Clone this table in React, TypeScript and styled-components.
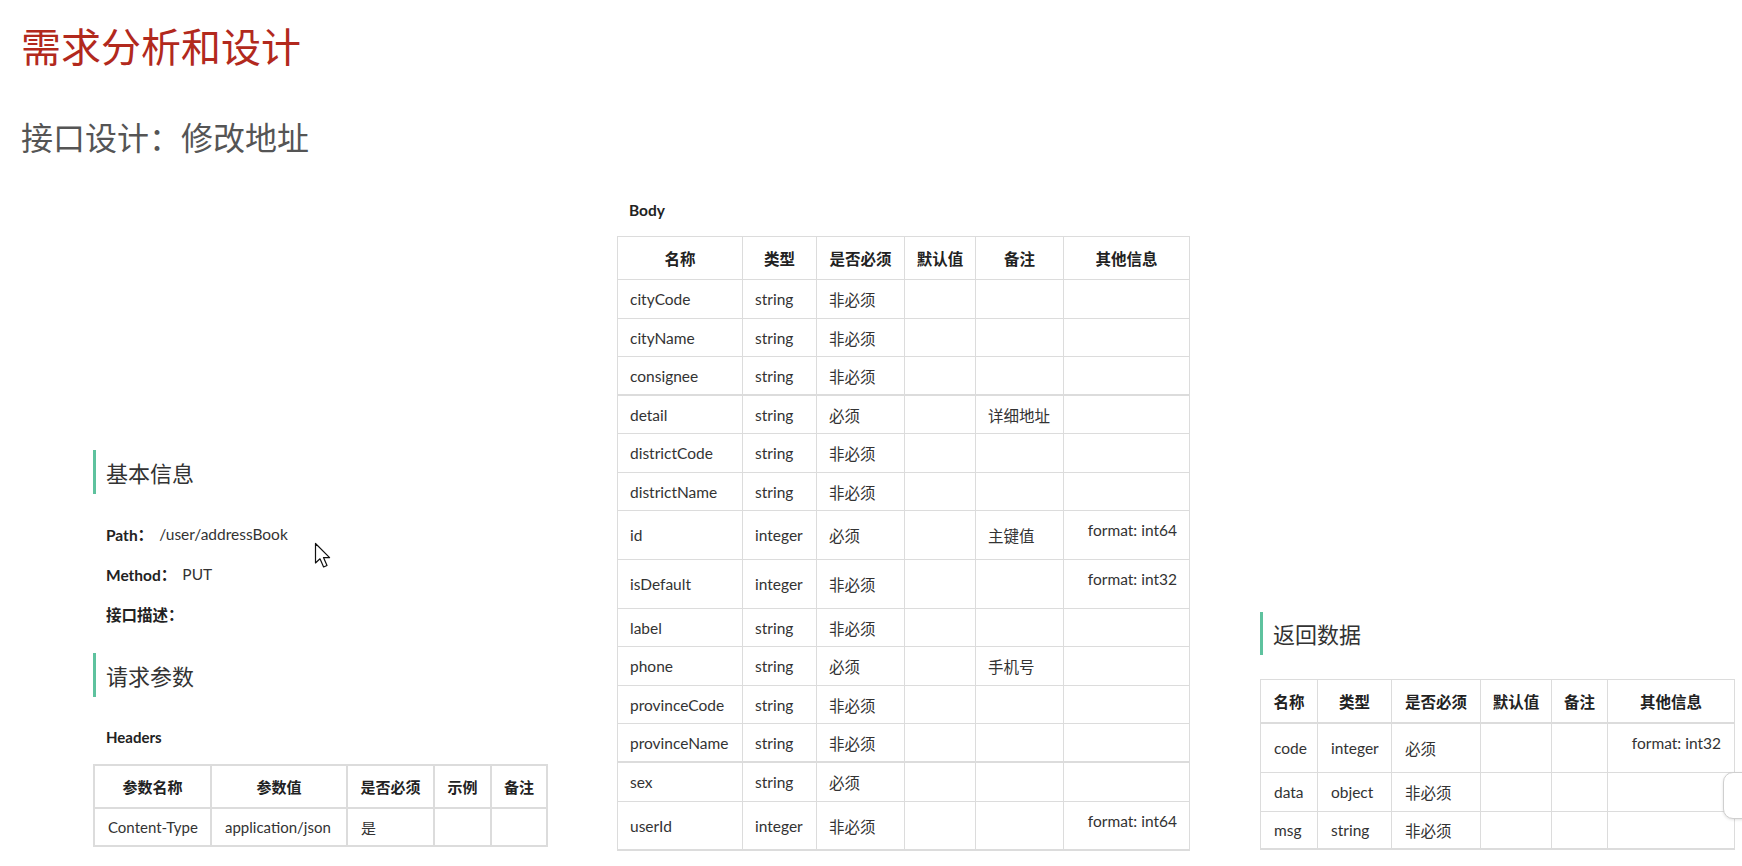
import React from "react";
import styled, { createGlobalStyle } from "styled-components";

const GlobalStyle = createGlobalStyle`
  html, body { margin: 0; padding: 0; background: #ffffff; }
  body {
    font-family: Lato, "Noto Sans CJK SC", sans-serif;
    color: #333333;
  }
`;

const Page = styled.div`
  position: relative;
  width: 1742px;
  height: 866px;
  overflow: hidden;
  display: flex;
  flex-direction: column;
  box-sizing: border-box;
  padding-bottom: 15px;
  background: #ffffff;
`;

const TitleBlock = styled.header`
  padding: 21px 0 0 21px;
  font-family: "Noto Sans CJK SC", sans-serif;
`;

const MainTitle = styled.h1`
  margin: 0;
  font-size: 40px;
  line-height: 48px;
  font-weight: 400;
  color: #b2291d;
`;

const SubTitle = styled.h2`
  margin: 47px 0 0 0;
  font-size: 32px;
  line-height: 40px;
  font-weight: 400;
  color: #555555;
`;

const ContentRow = styled.main`
  flex: 1;
  display: flex;
  align-items: flex-end;
`;

const Column = styled.section<{ $ml: number; $mb: number; $w: number }>`
  margin-left: ${(p) => p.$ml}px;
  margin-bottom: ${(p) => p.$mb}px;
  width: ${(p) => p.$w}px;
  display: flex;
  flex-direction: column;
`;

const SectionHeading = styled.h3<{ $mt?: number; $h: number }>`
  margin: ${(p) => p.$mt ?? 0}px 0 0 0;
  height: ${(p) => p.$h}px;
  line-height: ${(p) => p.$h}px;
  border-left: 3px solid #5ec29e;
  padding-left: 10px;
  font-family: "Noto Sans CJK SC", sans-serif;
  font-size: 22px;
  font-weight: 400;
  color: #333333;
`;

const InfoList = styled.div`
  margin-top: 20px;
  display: flex;
  flex-direction: column;
`;

const InfoRow = styled.div`
  height: 40px;
  display: flex;
  align-items: center;
  padding-left: 13px;
  font-size: 15.5px;
`;

const InfoLabel = styled.span`
  font-weight: 700;
  color: #222222;
`;

const InfoValue = styled.span`
  margin-left: 6px;
  color: #333333;
`;

const SubLabel = styled.div<{ $mt: number; $pl: number; $fs: number }>`
  margin-top: ${(p) => p.$mt}px;
  padding-left: ${(p) => p.$pl}px;
  font-size: ${(p) => p.$fs}px;
  line-height: 20px;
  font-weight: 700;
  color: #222222;
`;

const Table = styled.table<{ $fs: number; $bw: number; $mt: number; $w: number }>`
  margin-top: ${(p) => p.$mt}px;
  width: ${(p) => p.$w}px;
  border-collapse: separate;
  border-spacing: 0;
  table-layout: fixed;
  border-top: ${(p) => p.$bw}px solid #dcdcdc;
  border-left: ${(p) => p.$bw}px solid #dcdcdc;
  font-size: ${(p) => p.$fs}px;
  color: #333333;
`;

const Col = styled.col<{ $w: number }>`
  width: ${(p) => p.$w}px;
`;

const Row = styled.tr<{ $h: number }>`
  height: ${(p) => p.$h}px;
`;

const Th = styled.th<{ $bw: number; $bb: number }>`
  box-sizing: border-box;
  border-right: ${(p) => p.$bw}px solid #dcdcdc;
  border-bottom: ${(p) => p.$bb}px solid #dcdcdc;
  text-align: center;
  vertical-align: middle;
  font-weight: 700;
  color: #222222;
  padding: 0 2px;
  white-space: nowrap;
  overflow: hidden;
`;

const Td = styled.td<{ $bw: number; $bb: number; $pad: number; $fmt?: boolean }>`
  box-sizing: border-box;
  border-right: ${(p) => p.$bw}px solid #dcdcdc;
  border-bottom: ${(p) => p.$bb}px solid #dcdcdc;
  padding: ${(p) => (p.$fmt ? `10px ${p.$pad}px 0 0` : `0 0 0 ${p.$pad}px`)};
  text-align: ${(p) => (p.$fmt ? "right" : "left")};
  vertical-align: ${(p) => (p.$fmt ? "top" : "middle")};
  white-space: nowrap;
  overflow: hidden;
`;

const Cursor = styled.svg`
  position: absolute;
  left: 314px;
  top: 542px;
`;

const SideWidget = styled.div`
  position: absolute;
  left: 1723px;
  top: 772px;
  width: 32px;
  height: 45px;
  border: 1px solid #cfcfcf;
  border-radius: 10px;
  background: #ffffff;
  box-shadow: 0 1px 3px rgba(0, 0, 0, 0.12);
`;

type DataRow = { cells: string[]; h: number; thick?: boolean; fmt?: string };

interface TableSpec {
  widths: number[];
  headers: string[];
  headH: number;
  headThick?: boolean;
  rows: DataRow[];
  fs: number;
  bw: number;
  pad: number;
  mt: number;
  lastThick?: boolean;
}

const DataTable: React.FC<{ spec: TableSpec }> = ({ spec }) => {
  const total = spec.widths.reduce((a, b) => a + b, 0);
  return (
    <Table $fs={spec.fs} $bw={spec.bw} $mt={spec.mt} $w={total}>
      <colgroup>
        {spec.widths.map((w, i) => (
          <Col key={i} $w={i === 0 ? w - spec.bw : w} />
        ))}
      </colgroup>
      <thead>
        <Row $h={spec.headH}>
          {spec.headers.map((h, i) => (
            <Th key={i} $bw={spec.bw} $bb={spec.headThick ? 2 : spec.bw}>
              {h}
            </Th>
          ))}
        </Row>
      </thead>
      <tbody>
        {spec.rows.map((r, ri) => {
          const next = spec.rows[ri + 1];
          const isLast = ri === spec.rows.length - 1;
          const bb = (next && next.thick) || (isLast && spec.lastThick) ? 2 : spec.bw;
          return (
            <Row key={ri} $h={r.h}>
              {r.cells.map((c, ci) => (
                <Td key={ci} $bw={spec.bw} $bb={bb} $pad={spec.pad}>
                  {c}
                </Td>
              ))}
              {spec.headers.length > r.cells.length && (
                <Td $bw={spec.bw} $bb={bb} $pad={spec.pad} $fmt={!!r.fmt}>
                  {r.fmt ?? ""}
                </Td>
              )}
            </Row>
          );
        })}
      </tbody>
    </Table>
  );
};

const headersSpec: TableSpec = {
  widths: [119, 136, 87, 57, 56],
  headers: ["参数名称", "参数值", "是否必须", "示例", "备注"],
  headH: 43,
  rows: [{ cells: ["Content-Type", "application/json", "是", "", ""], h: 38 }],
  fs: 15,
  bw: 2,
  pad: 13,
  mt: 17,
};

const bodySpec: TableSpec = {
  widths: [126, 74, 88, 71, 88, 126],
  headers: ["名称", "类型", "是否必须", "默认值", "备注", "其他信息"],
  headH: 43,
  rows: [
    { cells: ["cityCode", "string", "非必须", "", ""], h: 39 },
    { cells: ["cityName", "string", "非必须", "", ""], h: 38 },
    { cells: ["consignee", "string", "非必须", "", ""], h: 39 },
    { cells: ["detail", "string", "必须", "", "详细地址"], h: 38, thick: true },
    { cells: ["districtCode", "string", "非必须", "", ""], h: 39 },
    { cells: ["districtName", "string", "非必须", "", ""], h: 38 },
    { cells: ["id", "integer", "必须", "", "主键值"], h: 49, fmt: "format: int64" },
    { cells: ["isDefault", "integer", "非必须", "", ""], h: 49, fmt: "format: int32" },
    { cells: ["label", "string", "非必须", "", ""], h: 38 },
    { cells: ["phone", "string", "必须", "", "手机号"], h: 39 },
    { cells: ["provinceCode", "string", "非必须", "", ""], h: 38 },
    { cells: ["provinceName", "string", "非必须", "", ""], h: 39 },
    { cells: ["sex", "string", "必须", "", ""], h: 39, thick: true },
    { cells: ["userId", "integer", "非必须", "", ""], h: 49, fmt: "format: int64" },
  ],
  fs: 15.5,
  bw: 1,
  pad: 12,
  mt: 16,
  lastThick: true,
};

const resultSpec: TableSpec = {
  widths: [58, 74, 89, 71, 56, 127],
  headers: ["名称", "类型", "是否必须", "默认值", "备注", "其他信息"],
  headH: 44,
  headThick: true,
  rows: [
    { cells: ["code", "integer", "必须", "", ""], h: 49, fmt: "format: int32" },
    { cells: ["data", "object", "非必须", "", ""], h: 39 },
    { cells: ["msg", "string", "非必须", "", ""], h: 38 },
  ],
  fs: 15.5,
  bw: 1,
  pad: 13,
  mt: 24,
  lastThick: true,
};

export default function App() {
  return (
    <>
      <GlobalStyle />
      <Page>
        <TitleBlock>
          <MainTitle>需求分析和设计</MainTitle>
          <SubTitle>接口设计：修改地址</SubTitle>
        </TitleBlock>
        <ContentRow>
          <Column $ml={93} $mb={4} $w={455}>
            <SectionHeading $h={44}>基本信息</SectionHeading>
            <InfoList>
              <InfoRow>
                <InfoLabel>Path：</InfoLabel>
                <InfoValue>/user/addressBook</InfoValue>
              </InfoRow>
              <InfoRow>
                <InfoLabel>Method：</InfoLabel>
                <InfoValue>PUT</InfoValue>
              </InfoRow>
              <InfoRow>
                <InfoLabel>接口描述：</InfoLabel>
              </InfoRow>
            </InfoList>
            <SectionHeading $mt={19} $h={44}>
              请求参数
            </SectionHeading>
            <SubLabel $mt={30} $pl={13} $fs={15}>
              Headers
            </SubLabel>
            <DataTable spec={headersSpec} />
          </Column>
          <Column $ml={69} $mb={0} $w={573}>
            <SubLabel $mt={0} $pl={12} $fs={15.5}>
              Body
            </SubLabel>
            <DataTable spec={bodySpec} />
          </Column>
          <Column $ml={70} $mb={1} $w={475}>
            <SectionHeading $h={43}>返回数据</SectionHeading>
            <DataTable spec={resultSpec} />
          </Column>
        </ContentRow>
        <Cursor width="20" height="28" viewBox="0 0 20 28">
          <path
            d="M1.5 1.5 L1.5 21 L6 16.8 L9.6 25 L13 23.5 L9.5 15.6 L15.6 15.6 Z"
            fill="#ffffff"
            stroke="#111111"
            strokeWidth="1.2"
            strokeLinejoin="round"
          />
        </Cursor>
        <SideWidget />
      </Page>
    </>
  );
}
